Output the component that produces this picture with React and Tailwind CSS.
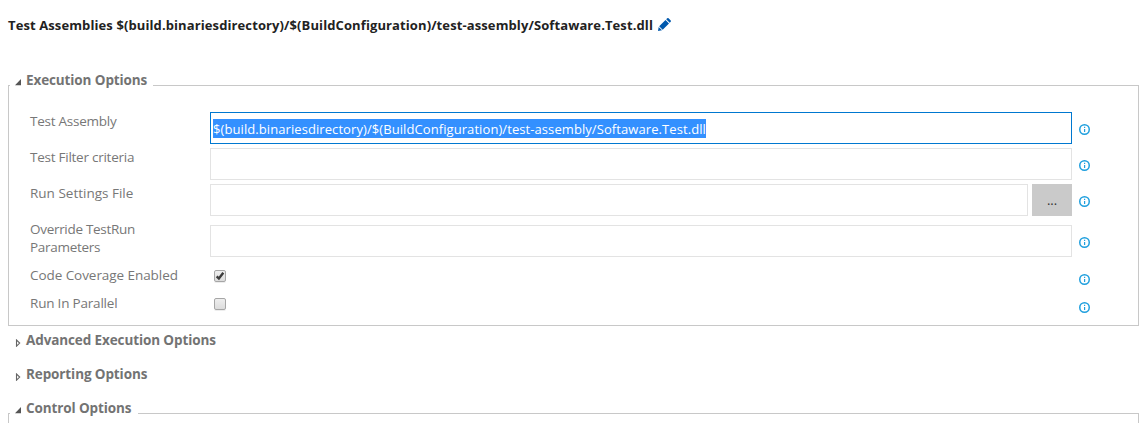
function InfoIcon({ className }) {
  return (
    <svg className={"ml-[7px] h-[11px] w-[11px] shrink-0 " + className} viewBox="0 0 11 11" fill="none">
      <circle cx="5.5" cy="5.5" r="4.75" stroke="#1f9fde" strokeWidth="1.5" />
      <path d="M5 2.8h1.2v1.2H5zM5 5h1.2v3.1H5z" fill="#1f9fde" />
    </svg>
  );
}

function Heading({ open, children }) {
  return (
    <>
      <svg className="mt-2 ml-[5px] h-[8px] w-[6px] shrink-0" viewBox="0 0 6 8">
        {open ? (
          <path d="M6 0v6.3H0z" fill="#555" />
        ) : (
          <path d="M1.5 1v6.2L4.7 4.1z" fill="none" stroke="#666" strokeWidth="1.1" />
        )}
      </svg>
      <span className="ml-[5px] text-[13.5px] leading-[18px] font-bold tracking-[-0.11px] whitespace-nowrap text-[#737373]">
        {children}
      </span>
    </>
  );
}

function Row({ label, className, labelClass = "", children, icon }) {
  return (
    <div className={"flex items-start " + className}>
      <div className={"w-[180px] shrink-0 text-[13.5px] leading-[18px] text-[#777] " + labelClass}>{label}</div>
      <div className="flex w-[862px] shrink-0">{children}</div>
      <InfoIcon className={icon} />
    </div>
  );
}

const box = "h-8 min-w-0 flex-1 border border-[#e3e3e3] bg-white";

function Check({ checked }) {
  return (
    <div className="mt-1 ml-1 h-3 w-3 rounded-[2px] border border-[#a6a6a6] bg-linear-to-b from-[#eee] to-[#dcdcdc] shadow-[0_1px_0_#ededed]">
      {checked && (
        <svg className="h-[10px] w-[10px]" viewBox="0 0 10 10" fill="none">
          <path d="M1.7 5.3l2.2 2.2L8.3 1.8" stroke="#3c3c3c" strokeWidth="2.4" />
        </svg>
      )}
    </div>
  );
}

export default function App() {
  return (
    <div className="h-[423px] w-[1139px] overflow-hidden bg-white pl-2 font-['Open_Sans','Noto_Sans',sans-serif]">
      <div className="flex h-[71px] items-start pt-4">
        <h1 className="text-[13px] leading-[18px] font-bold tracking-[0.105px] whitespace-nowrap text-[#222]">
          Test Assemblies $(build.binariesdirectory)/$(BuildConfiguration)/test-assembly/Softaware.Test.dll
        </h1>
        <svg className="mt-[2px] ml-[5px] h-[13px] w-[13px] shrink-0" viewBox="0 0 13 13" fill="#0058ad">
          <path d="M0 13l.7-4L4 12.3zM1.2 8.3L7.5 2 11 5.5 4.7 11.8zM8.2 1.3L9.2.3q.7-.6 1.4 0l2.1 2.1q.6.7 0 1.4l-1 1z" />
        </svg>
      </div>
      <fieldset className="h-[255px] border border-[#c8c8c8] pl-px">
        <legend className="flex h-[29px] w-[143px]">
          <Heading open>Execution Options</Heading>
        </legend>
        <div className="pt-3 pl-5">
          <Row label="Test Assembly" labelClass="tracking-[-0.25px]" className="h-9" icon="mt-3">
            <div className="flex h-8 min-w-0 flex-1 items-start border border-[#0078d0] pt-[6px] pl-[2px]">
              <span className="h-[19px] bg-[#3390ff] text-[13px] leading-[20px] tracking-[0.08px] whitespace-nowrap text-white">
                $(build.binariesdirectory)/$(BuildConfiguration)/test-assembly/Softaware.Test.dll
              </span>
            </div>
          </Row>
          <Row label="Test Filter criteria" labelClass="tracking-[-0.25px]" className="h-9" icon="mt-3">
            <div className={box} />
          </Row>
          <Row label="Run Settings File" className="h-9" icon="mt-3">
            <div className={box} />
            <button className="ml-1 h-8 w-10 bg-[#cacaca] pt-px text-[13px] text-[#333]">...</button>
          </Row>
          <Row
            label={<>Override TestRun<br />Parameters</>}
            labelClass="tracking-[-0.3px]"
            className="h-[46px]"
            icon="mt-[17px]"
          >
            <div className={"mt-[5px] " + box} />
          </Row>
          <Row label="Code Coverage Enabled" labelClass="tracking-[-0.06px]" className="h-7" icon="mt-2">
            <Check checked />
          </Row>
          <Row label="Run In Parallel" labelClass="tracking-[-0.2px]" className="h-7" icon="mt-2">
            <Check />
          </Row>
        </div>
      </fieldset>
      <div className="flex h-[34px] pt-[5px] pl-[2px]">
        <Heading>Advanced Execution Options</Heading>
      </div>
      <div className="flex h-[39px] pt-[5px] pl-[2px]">
        <Heading>Reporting Options</Heading>
      </div>
      <fieldset className="h-[60px] border border-[#c8c8c8] pl-px">
        <legend className="flex h-[29px] w-32">
          <Heading open>Control Options</Heading>
        </legend>
      </fieldset>
    </div>
  );
}
